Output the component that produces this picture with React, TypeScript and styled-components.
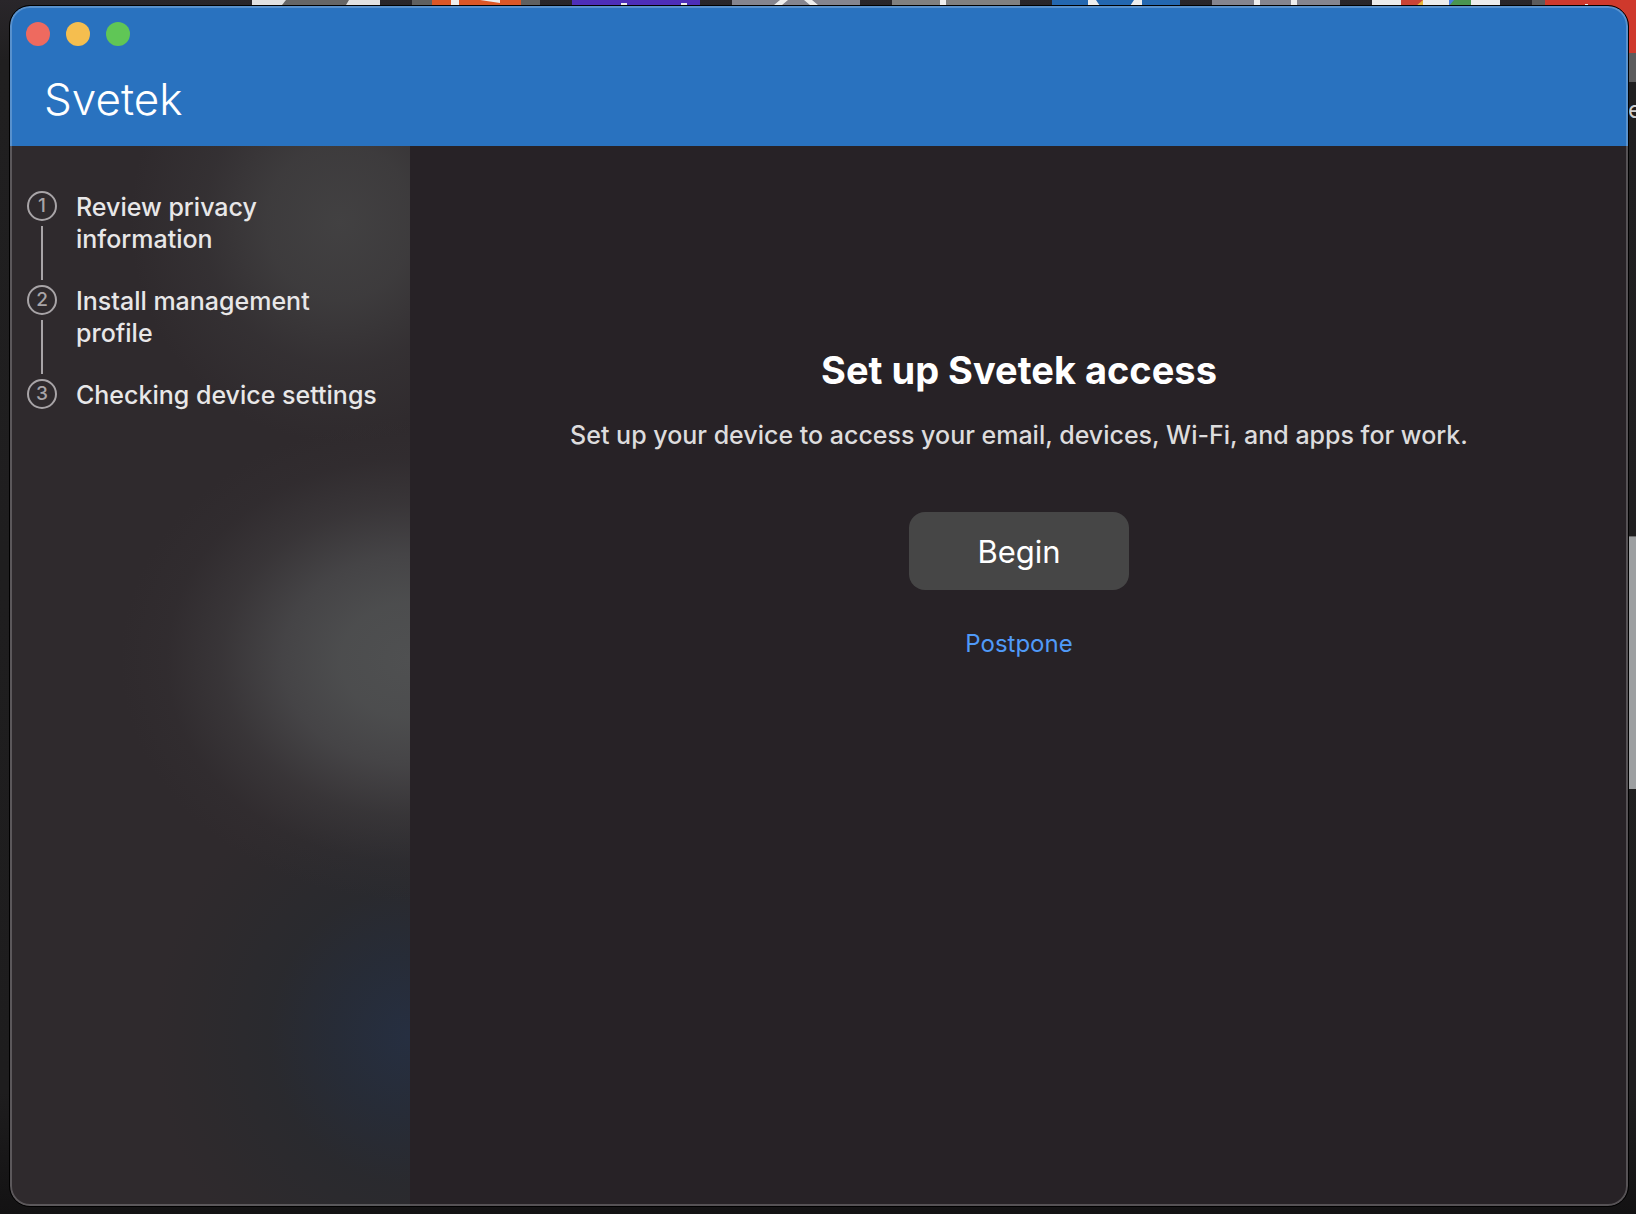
import React from "react";
import styled, { createGlobalStyle } from "styled-components";

const GlobalStyle = createGlobalStyle`
  *, *::before, *::after { box-sizing: border-box; }
  body {
    margin: 0;
    background: #1c1b1c;
    font-family: Inter, "Liberation Sans", sans-serif;
  }
`;

const Desktop = styled.div`
  position: relative;
  display: flex;
  min-height: 100vh;
  padding: 6px 8px 8px 10px;
  overflow: hidden;
  background: linear-gradient(to bottom, #29262a, #201f20 60px, #1e1d1e 90%, #131213);
`;

/* Everything in the backdrop lies underneath the window. */
const Backdrop = styled.div`
  position: absolute;
  inset: 0;
  overflow: hidden;
`;

const TileStrip = styled.div`
  display: flex;
  gap: 32px;
  padding-left: 252px;
`;

const Tile = styled.svg`
  display: block;
  flex: none;
  width: 128px;
  height: 82px;
`;

const TileLabel = styled.div`
  position: absolute;
  top: 94px;
  left: calc(100% - 8px);
  color: #d0d0d0;
  font-size: 24px;
  line-height: 32px;
`;

const PanelBehind = styled.div`
  position: absolute;
  top: 536px;
  right: 0;
  width: 40px;
  height: 253px;
  border-top: 1px solid #6b6b6c;
  background: #9d9fa1;
`;

const Window = styled.div`
  position: relative;
  display: flex;
  flex: 1;
  flex-direction: column;
  overflow: hidden;
  border-radius: 20px;
  background: #272226;
  outline: 1px solid #000;

  &::after {
    content: "";
    position: absolute;
    inset: 0;
    border: 2px solid rgba(255, 255, 255, 0.22);
    border-radius: 20px;
    pointer-events: none;
  }
`;

const Header = styled.header`
  display: flex;
  flex-direction: column;
  gap: 24px;
  height: 140px;
  padding: 16px 16px 0;
  background: #2972bf;
`;

const WindowControls = styled.div`
  display: flex;
  gap: 16px;
`;

const ControlDot = styled.button<{ $color: string }>`
  width: 24px;
  height: 24px;
  padding: 0;
  border: 0;
  border-radius: 50%;
  background: ${(p) => p.$color};
`;

const Brand = styled.div`
  padding-left: 18px;
  color: #fff;
  font-size: 44px;
  font-weight: 300;
  line-height: 58px;
`;

const Body = styled.div`
  display: flex;
  flex: 1;
`;

const Sidebar = styled.aside`
  flex: none;
  width: 400px;
  padding: 45px 24px 0 17px;
  background:
    radial-gradient(ellipse 290px 240px at 100% 514px, #4f5051 0%, rgba(78, 79, 80, 0.94) 24%, rgba(76, 76, 78, 0.76) 44%, rgba(72, 71, 73, 0.38) 65%, rgba(60, 57, 60, 0.14) 84%, transparent 100%),
    radial-gradient(ellipse 210px 220px at 330px 76px, rgba(67, 66, 67, 0.95) 0%, rgba(66, 65, 66, 0.75) 35%, rgba(60, 58, 60, 0.4) 65%, transparent 100%),
    radial-gradient(ellipse 255px 270px at 100% 890px, #262f41 0%, rgba(38, 44, 56, 0.9) 30%, rgba(40, 42, 47, 0.75) 55%, rgba(44, 42, 45, 0.55) 85%, transparent 100%),
    #2f2a2d;
`;

const StepList = styled.ol`
  display: flex;
  flex-direction: column;
  margin: 0;
  padding: 0;
  list-style: none;
`;

const Step = styled.li`
  display: flex;
  gap: 19px;
`;

const StepRail = styled.div`
  display: flex;
  flex: none;
  flex-direction: column;
  align-items: center;
  gap: 5px;
  width: 30px;
`;

const StepNumber = styled.span`
  display: flex;
  align-items: center;
  justify-content: center;
  width: 30px;
  height: 30px;
  border: 2px solid #a8a4a7;
  border-radius: 50%;
  color: #a8a4a7;
  font-size: 19px;
  font-weight: 500;
  line-height: 24px;
`;

const StepLine = styled.span`
  width: 2px;
  height: 54px;
  margin-bottom: 5px;
  background: #a8a4a7;
`;

const StepLabel = styled.span`
  color: #e8e7e8;
  font-size: 25px;
  font-weight: 500;
  line-height: 32px;
`;

const Main = styled.main`
  display: flex;
  flex: 1;
  flex-direction: column;
  align-items: center;
  padding: 200px 24px 48px;
  text-align: center;
`;

const Title = styled.h1`
  margin: 0;
  color: #fff;
  font-size: 38px;
  font-weight: 700;
  line-height: 48px;
`;

const Description = styled.p`
  margin: 25px 0 61px;
  color: #dddcdd;
  font-size: 25px;
  font-weight: 500;
  line-height: 32px;
`;

const BeginButton = styled.button`
  width: 220px;
  height: 78px;
  padding: 0;
  border: 0;
  border-radius: 16px;
  background: #464646;
  color: #fff;
  font-family: inherit;
  font-size: 31px;
`;

const PostponeLink = styled.a`
  margin-top: 38px;
  color: #509af8;
  font-size: 24px;
  line-height: 32px;
  text-decoration: none;
`;

const steps = [
  "Review privacy information",
  "Install management profile",
  "Checking device settings",
];

const controls = [
  { label: "Close", color: "#ee6a5f" },
  { label: "Minimize", color: "#f5be4f" },
  { label: "Zoom", color: "#60c656" },
];

function AppTiles() {
  return (
    <TileStrip aria-hidden="true">
      <Tile>
        <rect width="128" height="82" fill="#e2e2e2" />
        <path d="M34 0H97L94 5H30Z" fill="#666" />
      </Tile>
      <Tile>
        <rect width="128" height="82" fill="#606060" />
        <rect x="20" width="89" height="82" fill="#dc5727" />
        <path d="M39 0h8v6h-8zM68 0h20v3z" fill="#eee" />
      </Tile>
      <Tile>
        <rect width="128" height="82" fill="#4e2fb9" />
        <path d="M49 3h6v4h-6zM109 3h6v4h-6z" fill="#eee" />
      </Tile>
      <Tile>
        <rect width="128" height="82" fill="#85858f" />
        <path d="M48 0h8l-6 5h-8zM72 0h8l6 5h-8z" fill="#eee" />
      </Tile>
      <Tile>
        <rect width="128" height="82" fill="#808080" />
        <path d="M48 0h6v6h-6z" fill="#eee" />
      </Tile>
      <Tile>
        <rect width="128" height="82" fill="#2367b0" />
        <path d="M36 0h8l4 6H36zM82 0h8v6H78z" fill="#eee" />
      </Tile>
      <Tile>
        <rect width="128" height="82" fill="#85858f" />
        <path d="M42 0h6v6h-6zM79 0h6v6h-6z" fill="#eee" />
      </Tile>
      <Tile>
        <rect width="128" height="82" fill="#ececec" />
        <path d="M29 0h22v6H29z" fill="#c94436" />
        <path d="M51 0v6h-7z" fill="#e8b53a" />
        <path d="M77 0h22v6H77z" fill="#4a9551" />
        <path d="M77 0h5l-5 6z" fill="#4a7fe0" />
      </Tile>
      <Tile>
        <rect width="128" height="82" fill="#5c5b5c" />
        <rect x="13" width="115" height="53" fill="#cf392c" />
        <rect x="53" y="4" width="3" height="2" fill="#eee" />
      </Tile>
    </TileStrip>
  );
}

export default function App() {
  return (
    <>
      <GlobalStyle />
      <Desktop>
        <Backdrop>
          <AppTiles />
          <TileLabel>e</TileLabel>
          <PanelBehind />
        </Backdrop>
        <Window>
          <Header>
            <WindowControls>
              {controls.map((c) => (
                <ControlDot key={c.label} type="button" aria-label={c.label} $color={c.color} />
              ))}
            </WindowControls>
            <Brand>Svetek</Brand>
          </Header>
          <Body>
            <Sidebar>
              <StepList>
                {steps.map((label, i) => (
                  <Step key={label}>
                    <StepRail>
                      <StepNumber>{i + 1}</StepNumber>
                      {i < steps.length - 1 && <StepLine />}
                    </StepRail>
                    <StepLabel>{label}</StepLabel>
                  </Step>
                ))}
              </StepList>
            </Sidebar>
            <Main>
              <Title>Set up Svetek access</Title>
              <Description>
                Set up your device to access your email, devices, Wi-Fi, and apps for work.
              </Description>
              <BeginButton type="button">Begin</BeginButton>
              <PostponeLink href="#postpone">Postpone</PostponeLink>
            </Main>
          </Body>
        </Window>
      </Desktop>
    </>
  );
}
